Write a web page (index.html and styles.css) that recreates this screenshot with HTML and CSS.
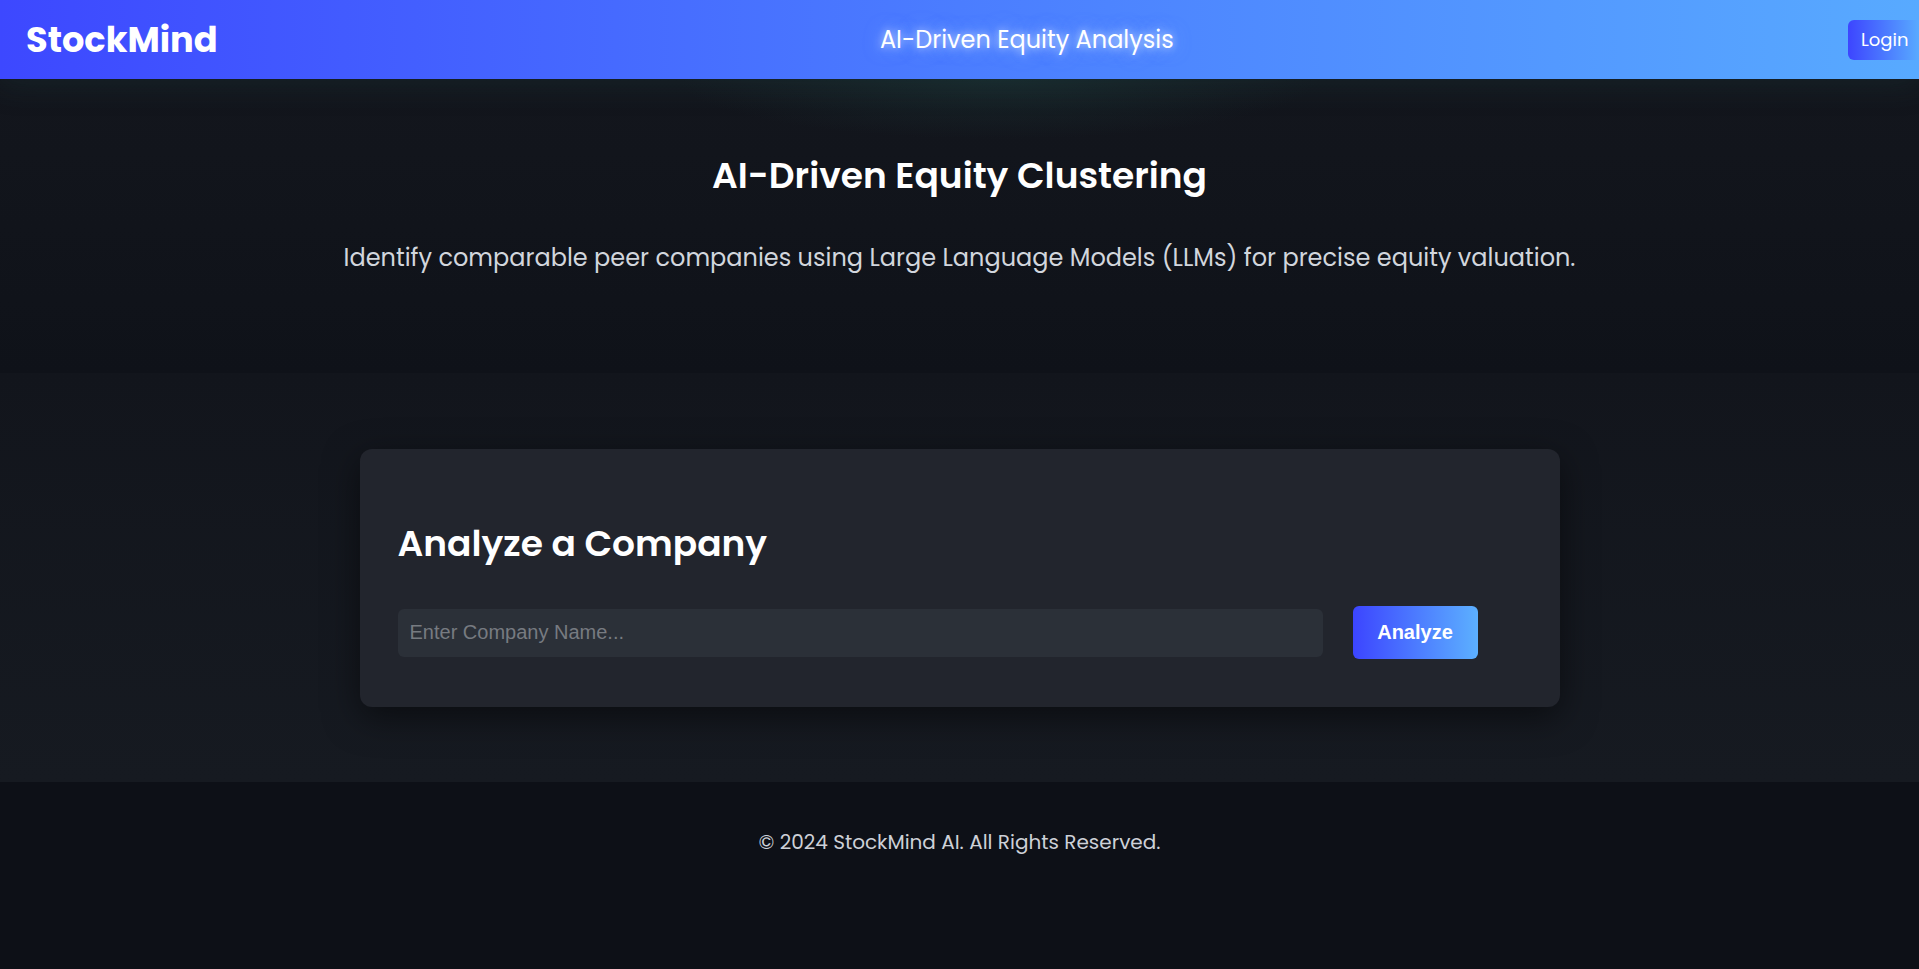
FILE: index.html
```html
<!DOCTYPE html>
<html lang="en">
<head>
<meta charset="utf-8">
<title>StockMind</title>
<link rel="stylesheet" href="styles.css">
</head>
<body>
<header class="topbar">
  <div class="logo">StockMind</div>
  <div class="tagline">AI-Driven Equity Analysis</div>
  <button class="login">Login</button>
</header>
<section class="hero">
  <h1 class="hero-title">AI-Driven Equity Clustering</h1>
  <p class="hero-sub">Identify comparable peer companies using Large Language Models (LLMs) for precise equity valuation.</p>
</section>
<main class="analyze">
  <div class="card">
    <h2 class="card-title">Analyze a Company</h2>
    <div class="search-row">
      <input class="search-input" type="text" placeholder="Enter Company Name...">
      <button class="analyze-btn">Analyze</button>
    </div>
  </div>
</main>
<footer class="footer">
  <p class="footer-text">© 2024 StockMind AI. All Rights Reserved.</p>
</footer>
</body>
</html>
```
FILE: styles.css
```css
* { box-sizing: border-box; }
html, body { margin: 0; padding: 0; }
body {
  background: #0d1017;
  font-family: Poppins, Inter, "Noto Sans", sans-serif;
  color: #fff;
  overflow: hidden;
}
.topbar {
  height: 79px;
  display: flex;
  align-items: center;
  justify-content: space-between;
  padding: 0 0 0 26px;
  background: linear-gradient(90deg, #3d48ff 0%, #4b7dff 50%, #58aaff 100%);
  box-shadow: 0 6px 30px rgba(30, 70, 70, 0.25);
  position: relative;
  z-index: 2;
}
.logo {
  font-size: 35.2px;
  font-weight: 700;
  line-height: 40px;
}
.tagline {
  font-size: 24px;
  font-weight: 400;
  line-height: 30px;
  margin-right: 12px;
  text-shadow: 0 0 8px rgba(255, 255, 255, 0.7), 0 0 18px rgba(180, 230, 255, 0.5);
}
.login {
  height: 40px;
  width: 71px;
  border: none;
  border-radius: 6px 0 0 6px;
  background: linear-gradient(90deg, #3d45ff 0%, #58aaff 100%);
  color: #fff;
  font-family: inherit;
  font-size: 18px;
  padding: 0 0 0 13px;
  text-align: left;
}
.hero {
  padding: 75px 0 101px;
  text-align: center;
  background: radial-gradient(ellipse 320px 60px at 52% 0%, rgba(30, 60, 60, 0.45), transparent 100%), linear-gradient(180deg, #13161d 0%, #0f1219 100%);
}
.hero-title {
  margin: 0;
  font-size: 36px;
  line-height: 44px;
  font-weight: 600;
  color: #fff;
}
.hero-sub {
  margin: 45px 0 0;
  padding-bottom: 0;
  font-size: 24px;
  line-height: 29px;
  color: #d2d6dd;
}
.analyze {
  padding: 76px 0 75px;
  background: linear-gradient(180deg, #12151c 0%, #161a21 100%);
  display: flex;
  justify-content: center;
}
.card {
  width: 1200px;
  background: #22252d;
  border-radius: 12px;
  padding: 72px 40px 48px 38px;
  box-shadow: 0 10px 35px rgba(0, 0, 0, 0.5);
}
.card-title {
  margin: 0;
  font-size: 36px;
  line-height: 46px;
  font-weight: 600;
  color: #fff;
}
.search-row {
  margin-top: 39px;
  display: flex;
  align-items: center;
  gap: 30px;
}
.search-input {
  width: 925px;
  height: 48px;
  border: none;
  border-radius: 6px;
  background: #2b3038;
  padding: 0 12px;
  font-family: "Liberation Sans", Arial, sans-serif;
  font-size: 20px;
  color: #fff;
  outline: none;
}
.search-input::placeholder { color: #777b81; }
.analyze-btn {
  width: 125px;
  height: 53px;
  border: none;
  border-radius: 6px;
  background: linear-gradient(90deg, #3c45ff 0%, #5cb0ff 100%);
  color: #fff;
  font-family: "Liberation Sans", Arial, sans-serif;
  font-weight: 700;
  font-size: 20px;
}
.footer {
  padding: 46px 0 44px;
  text-align: center;
  background: #0d1017;
}
.footer-text {
  margin: 0;
  font-size: 20px;
  line-height: 28px;
  color: #cdd1d8;
}
```
